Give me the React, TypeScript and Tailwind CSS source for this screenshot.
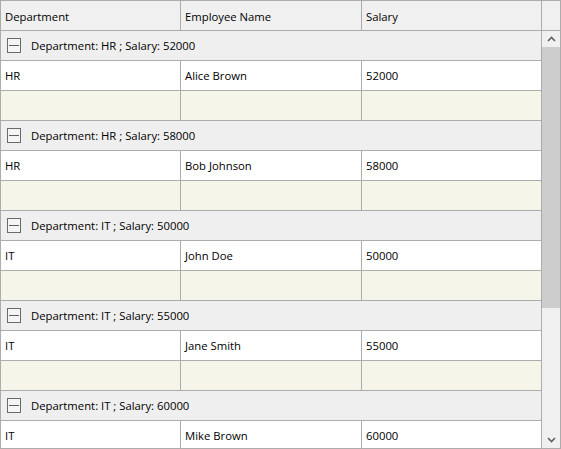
import React from 'react';

interface Employee {
  department: string;
  name: string;
  salary: number;
}

const employees: Employee[] = [
  { department: 'HR', name: 'Alice Brown', salary: 52000 },
  { department: 'HR', name: 'Bob Johnson', salary: 58000 },
  { department: 'IT', name: 'John Doe', salary: 50000 },
  { department: 'IT', name: 'Jane Smith', salary: 55000 },
  { department: 'IT', name: 'Mike Brown', salary: 60000 },
];

// column widths include the right grid line
const cellBase = 'h-full flex items-center pl-[4px] pt-[2px] border-r border-[#acacac] overflow-hidden whitespace-nowrap';

function Row({ cells, alt }: { cells: string[]; alt?: boolean }) {
  return (
    <div
      className={`grid grid-cols-[180px_181px_180px] h-[30px] shrink-0 border-b border-[#acacac] ${
        alt ? 'bg-[#f5f5e9]' : 'bg-white'
      }`}
    >
      {cells.map((c, i) => (
        <div key={i} className={cellBase}>
          {c}
        </div>
      ))}
    </div>
  );
}

function GroupRow({ label }: { label: string }) {
  return (
    <div className="h-[30px] shrink-0 flex items-center bg-[#efefef] border-b border-[#acacac]">
      {/* collapse box */}
      <div className="ml-[6px] w-[14px] h-[15px] border border-[#6a6a6a] flex items-center justify-center bg-[#f5f5f5]">
        <div className="w-[10px] h-px bg-[#5f5f5f]" />
      </div>
      <span className="ml-[10px] pt-[2px]">{label}</span>
    </div>
  );
}

export default function App() {
  return (
    <div
      className="w-[561px] h-[449px] border border-[#acacac] bg-white text-[11.3px] text-black flex flex-col overflow-hidden"
      style={{ fontFamily: '"Open Sans", "Noto Sans", sans-serif' }}
    >
      {/* Header */}
      <div className="grid grid-cols-[180px_181px_180px_1fr] h-[30px] shrink-0 bg-[#f0f0f0] border-b border-[#acacac]">
        <div className={`${cellBase} pt-[4px]`}>Department</div>
        <div className={`${cellBase} pt-[4px]`}>Employee Name</div>
        <div className={`${cellBase} pt-[4px]`}>Salary</div>
        <div />
      </div>

      {/* Body */}
      <div className="flex flex-1 min-h-0">
        <div className="w-[541px] flex flex-col overflow-hidden border-r border-[#acacac]">
          {employees.map((e) => (
            <React.Fragment key={e.name}>
              <GroupRow label={`Department: ${e.department} ; Salary: ${e.salary}`} />
              <Row cells={[e.department, e.name, String(e.salary)]} />
              <Row cells={['', '', '']} alt />
            </React.Fragment>
          ))}
        </div>

        {/* Scrollbar */}
        <div className="flex-1 flex flex-col bg-[#f0f0f0]">
          <div className="h-[16px] flex items-center justify-center text-[#606060]">
            <svg width="9" height="6" viewBox="0 0 9 6">
              <path d="M1 5 L4.5 1.5 L8 5" stroke="currentColor" strokeWidth="1.6" fill="none" />
            </svg>
          </div>
          <div className="h-[261px] bg-[#cdcdcd]" />
          <div className="flex-1" />
          <div className="h-[16px] flex items-center justify-center text-[#606060]">
            <svg width="9" height="6" viewBox="0 0 9 6">
              <path d="M1 1 L4.5 4.5 L8 1" stroke="currentColor" strokeWidth="1.6" fill="none" />
            </svg>
          </div>
        </div>
      </div>
    </div>
  );
}
